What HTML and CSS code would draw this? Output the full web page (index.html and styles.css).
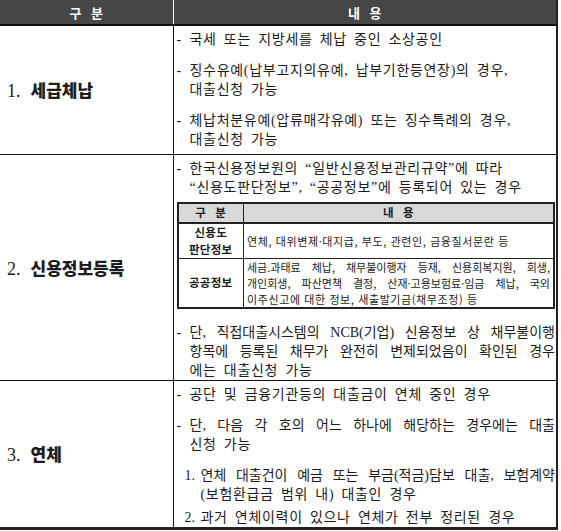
FILE: index.html
```html
<!DOCTYPE html>
<html lang="ko">
<head>
<meta charset="utf-8">
<title>대출 제한 대상</title>
<link rel="stylesheet" href="styles.css">
</head>
<body>
<table class="main">
  <colgroup><col class="col-a"><col class="col-b"></colgroup>
  <thead>
    <tr><th>구 분</th><th>내 용</th></tr>
  </thead>
  <tbody>
    <tr class="r1">
      <td class="title"><span class="num">1.</span><b>세급체납</b></td>
      <td class="body">
        <div class="item"><span class="mk">-</span><div class="txt"><span class="ln">국세 또는 지방세를 체납 중인 소상공인</span></div></div>
        <div class="item gap"><span class="mk">-</span><div class="txt"><span class="ln">징수유예(납부고지의유예, 납부기한등연장)의 경우,</span><span class="ln">대출신청 가능</span></div></div>
        <div class="item gap"><span class="mk">-</span><div class="txt"><span class="ln">체납처분유예(압류매각유예) 또는 징수특례의 경우,</span><span class="ln">대출신청 가능</span></div></div>
      </td>
    </tr>
    <tr class="r2">
      <td class="title"><span class="num">2.</span><b>신용정보등록</b></td>
      <td class="body">
        <div class="item"><span class="mk">-</span><div class="txt"><span class="ln">한국신용정보원의 “일반신용정보관리규약”에 따라</span><span class="ln">“신용도판단정보”, “공공정보”에 등록되어 있는 경우</span></div></div>
        <table class="inner">
          <colgroup><col class="ic-a"><col class="ic-b"></colgroup>
          <thead><tr><th>구 분</th><th>내 용</th></tr></thead>
          <tbody>
            <tr class="ir1"><td class="lab">신용도<br>판단정보</td><td class="desc">연체, 대위변제·대지급, 부도, 관련인, 금융질서문란 등</td></tr>
            <tr class="ir2"><td class="lab">공공정보</td><td class="desc"><span class="ln fill">세금.과태료 체납, 채무불이행자 등재, 신용회복지원, 회생,</span><span class="ln fill">개인회생, 파산면책 결정, 산재·고용보험료·임금 체납, 국외</span><span class="ln">이주신고에 대한 정보, 새출발기금(채무조정) 등</span></td></tr>
          </tbody>
        </table>
        <div class="item after"><span class="mk">-</span><div class="txt"><span class="ln fill">단, 직접대출시스템의 NCB(기업) 신용정보 상 채무불이행</span><span class="ln fill">항목에 등록된 채무가 완전히 변제되었음이 확인된 경우</span><span class="ln">에는 대출신청 가능</span></div></div>
      </td>
    </tr>
    <tr class="r3">
      <td class="title"><span class="num">3.</span><b>연체</b></td>
      <td class="body">
        <div class="item"><span class="mk">-</span><div class="txt"><span class="ln">공단 및 금융기관등의 대출금이 연체 중인 경우</span></div></div>
        <div class="item gap"><span class="mk">-</span><div class="txt"><span class="ln fill">단, 다음 각 호의 어느 하나에 해당하는 경우에는 대출</span><span class="ln">신청 가능</span></div></div>
        <div class="item numbered gap"><span class="mk">1.</span><div class="txt"><span class="ln fill">연체 대출건이 예금 또는 부금(적금)담보 대출, 보험계약</span><span class="ln">(보험환급금 범위 내) 대출인 경우</span></div></div>
        <div class="item numbered gap-s"><span class="mk">2.</span><div class="txt"><span class="ln">과거 연체이력이 있으나 연체가 전부 정리된 경우</span></div></div>
      </td>
    </tr>
  </tbody>
</table>
</body>
</html>
```
FILE: styles.css
```css
html, body {
  margin: 0;
  padding: 0;
  background: #ffffff;
}

.main {
  border-collapse: collapse;
  table-layout: fixed;
  width: 558px;
  font-family: "Liberation Serif", "Noto Sans CJK KR", serif;
  color: #1c1c1c;
}

.col-a { width: 173px; }

.main > thead th {
  background: #464646;
  color: #ffffff;
  height: 24px;
  padding: 0;
  font-family: "Noto Sans CJK KR", sans-serif;
  font-weight: 700;
  font-size: 13px;
  word-spacing: 6px;
  border-bottom: 2px solid #111;
  border-right: 2px solid #222;
}

.main > thead th:first-child {
  border-right: 1px solid #ffffff;
}

.main > tbody > tr > td {
  border-top: 1px solid #111;
  border-bottom: 1px solid #111;
  padding: 0;
}

.main > tbody > tr:last-child > td {
  border-bottom: 3px solid #222;
}

.r1 { height: 129px; }
.r2 { height: 226px; }
.r3 { height: 148px; }

.title {
  vertical-align: middle;
  padding-left: 7px !important;
  font-size: 17px;
  white-space: nowrap;
}

.title .num {
  font-family: "Liberation Serif", serif;
  font-size: 18px;
  margin-right: 10px;
}

.title b {
  font-family: "Noto Sans CJK KR", sans-serif;
  font-weight: 900;
  font-size: 17px;
}

.body {
  vertical-align: top;
  border-left: 1px solid #111;
  border-right: 2px solid #222;
  padding: 4px 1px 0 3px !important;
  font-size: 14px;
  line-height: 19px;
  letter-spacing: 0.7px;
  word-spacing: 3px;
}

.item {
  display: flex;
}

.item.gap { margin-top: 12px; }
.item.gap-s { margin-top: 4px; }
.item.after { margin-top: 14px; }

.mk {
  flex: none;
  width: 13px;
  letter-spacing: 0;
}

.item.numbered { padding-left: 8px; }
.item.numbered .mk { width: 16px; }

.txt { flex: 1; min-width: 0; }

.ln { display: block; white-space: nowrap; }

.ln.fill {
  text-align: justify;
  text-align-last: justify;
  letter-spacing: 0;
  word-spacing: 0;
}

.inner {
  width: 100%;
  margin-top: 5px;
  border-collapse: collapse;
  table-layout: fixed;
  border: 2px solid #222;
  font-family: "Noto Sans CJK KR", sans-serif;
  font-size: 11px;
  line-height: 16px;
  letter-spacing: 0.6px;
  word-spacing: 0;
}

.ic-a { width: 66px; }

.inner th {
  background: #d9d9d9;
  height: 18px;
  padding: 0;
  font-weight: 700;
  font-size: 11.5px;
  line-height: 17px;
  word-spacing: 5px;
  border: 1px solid #222;
  border-bottom: 2px solid #222;
}

.inner td {
  border: 1px solid #222;
  vertical-align: middle;
  padding: 0 3px;
}

.ir1 { height: 35px; }
.ir2 { height: 48px; }

.lab {
  text-align: center;
  font-weight: 700;
  font-size: 11.5px;
  line-height: 17px;
  letter-spacing: 0.3px;
}

.desc .ln { line-height: 16px; }

.desc .ln.fill { letter-spacing: 0; }
```
